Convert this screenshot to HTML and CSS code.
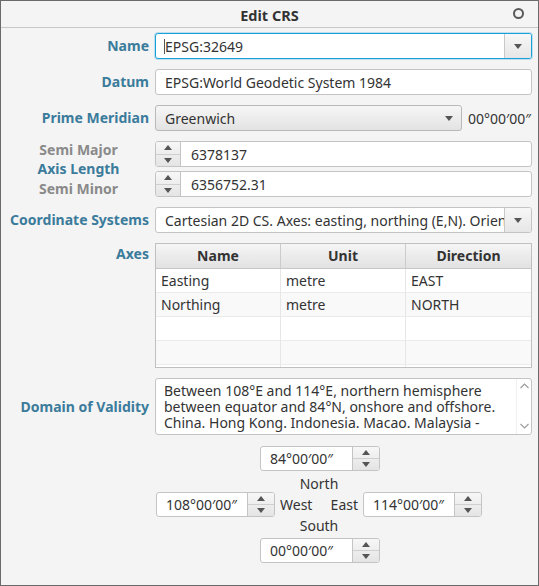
FILE: index.html
```
<!DOCTYPE html>
<html>
<head>
<meta charset="utf-8">
<link rel="stylesheet" href="styles.css">
</head>
<body>
<div class="window">
  <div class="titlebar">
    <span></span>
    <span class="title">Edit CRS</span>
    <span class="ring"></span>
  </div>
  <div class="form">
    <div class="lbl">Name</div>
    <div class="combo editable focused">
      <div class="ctext"><span class="caret"></span>EPSG:32649</div>
      <div class="cbtn"><span class="tri-down"></span></div>
    </div>

    <div class="lbl">Datum</div>
    <div class="field">EPSG:World Geodetic System 1984</div>

    <div class="lbl">Prime Meridian</div>
    <div class="prime-row">
      <div class="combo plain">
        <div class="ctext">Greenwich</div>
        <div class="cbtn plain-btn"><span class="tri-down"></span></div>
      </div>
      <span class="pm-value">00°00′00″</span>
    </div>

    <div class="semi-labels">
      <div class="lbl gray">Semi Major</div>
      <div class="lbl">Axis Length</div>
      <div class="lbl gray">Semi Minor</div>
    </div>
    <div class="semi-spins">
      <div class="lspin">
        <div class="sbtns"><div class="sb"><span class="tri-up"></span></div><div class="sb"><span class="tri-down"></span></div></div>
        <div class="stext">6378137</div>
      </div>
      <div class="lspin">
        <div class="sbtns"><div class="sb"><span class="tri-up"></span></div><div class="sb"><span class="tri-down"></span></div></div>
        <div class="stext">6356752.31</div>
      </div>
    </div>

    <div class="lbl">Coordinate Systems</div>
    <div class="combo editable">
      <div class="ctext clip">Cartesian 2D CS. Axes: easting, northing (E,N). Orientations: east, north. UoM: m.</div>
      <div class="cbtn"><span class="tri-down"></span></div>
    </div>

    <div class="lbl top">Axes</div>
    <div class="table">
      <div class="th">Name</div><div class="th">Unit</div><div class="th last">Direction</div>
      <div class="td">Easting</div><div class="td">metre</div><div class="td last">EAST</div>
      <div class="td odd">Northing</div><div class="td odd">metre</div><div class="td odd last">NORTH</div>
      <div class="td"></div><div class="td"></div><div class="td last"></div>
      <div class="td odd"></div><div class="td odd"></div><div class="td odd last"></div>
      <div class="td"></div><div class="td"></div><div class="td last"></div>
    </div>

    <div class="lbl">Domain of Validity</div>
    <div class="textarea">
      <div class="ta-text">Between 108°E and 114°E, northern hemisphere<br>between equator and 84°N, onshore and offshore.<br>China. Hong Kong. Indonesia. Macao. Malaysia -</div>
      <div class="ta-scroll">
        <svg width="9" height="6" viewBox="0 0 9 6"><path d="M0.5 5 L4.5 1 L8.5 5" fill="none" stroke="#9a9a9a" stroke-width="1.1"/></svg>
        <svg width="9" height="6" viewBox="0 0 9 6"><path d="M0.5 1 L4.5 5 L8.5 1" fill="none" stroke="#9a9a9a" stroke-width="1.1"/></svg>
      </div>
    </div>

    <div></div>
    <div class="compass">
      <div class="rspin center">
        <div class="stext">84°00′00″</div>
        <div class="sbtns right"><div class="sb"><span class="tri-up"></span></div><div class="sb"><span class="tri-down"></span></div></div>
      </div>
      <div class="clabel north">North</div>
      <div class="rspin">
        <div class="stext">108°00′00″</div>
        <div class="sbtns right"><div class="sb"><span class="tri-up"></span></div><div class="sb"><span class="tri-down"></span></div></div>
      </div>
      <div class="we"><span>West</span><span>East</span></div>
      <div class="rspin">
        <div class="stext">114°00′00″</div>
        <div class="sbtns right"><div class="sb"><span class="tri-up"></span></div><div class="sb"><span class="tri-down"></span></div></div>
      </div>
      <div class="clabel south">South</div>
      <div class="rspin center">
        <div class="stext">00°00′00″</div>
        <div class="sbtns right"><div class="sb"><span class="tri-up"></span></div><div class="sb"><span class="tri-down"></span></div></div>
      </div>
    </div>
  </div>
</div>
</body>
</html>
```
FILE: styles.css
```
* { box-sizing: border-box; }
html, body { margin: 0; padding: 0; }
body {
  font-family: "Noto Sans", "Open Sans", sans-serif;
  font-size: 14px;
  color: #333;
  background: #f4f4f4;
}
.window {
  width: 539px;
  height: 586px;
  border: 1px solid #6a6a6a;
  background: #f4f4f4;
  display: flex;
  flex-direction: column;
  overflow: hidden;
}
.titlebar {
  height: 27px;
  flex: none;
  border-bottom: 1px solid #c8c8c8;
  display: grid;
  grid-template-columns: 1fr auto 1fr;
  align-items: center;
}
.title {
  font-weight: bold;
  font-size: 14.5px;
  color: #333;
  padding-top: 1px;
}
.ring {
  justify-self: end;
  margin-right: 14px;
  margin-top: -1px;
  width: 11px;
  height: 11px;
  border: 2px solid #5a5a5a;
  border-radius: 50%;
}
.form {
  display: grid;
  grid-template-columns: 141px 1fr;
  column-gap: 6px;
  row-gap: 10px;
  padding: 5px 6px 0 7px;
}
.lbl {
  font-weight: bold;
  color: #3b7b9b;
  text-align: right;
  align-self: center;
  white-space: nowrap;
  line-height: 18px;
}
.lbl.gray { color: #8a8a8a; }
.lbl.top { align-self: start; margin-top: 2px; }

.field {
  height: 26px;
  background: #fff;
  border: 1px solid #c4c4c4;
  border-radius: 3px;
  padding: 0 9px;
  display: flex;
  align-items: center;
  white-space: nowrap;
}
.combo {
  display: flex;
  height: 26px;
  border: 1px solid #c4c4c4;
  border-radius: 3px;
  background: #fff;
  overflow: hidden;
}
.combo.focused {
  border-color: #1aa0d8;
  box-shadow: 0 0 0 1px rgba(26, 160, 216, 0.25);
}
.ctext {
  flex: 1;
  min-width: 0;
  padding: 0 9px;
  display: flex;
  align-items: center;
  white-space: nowrap;
  overflow: hidden;
}
.ctext.clip { padding-right: 4px; }
.caret {
  width: 1px;
  height: 15px;
  background: #555;
  margin-left: -1px;
}
.cbtn {
  width: 27px;
  flex: none;
  border-left: 1px solid #c8c8c8;
  background: linear-gradient(#f7f7f7, #e6e6e6);
  display: flex;
  align-items: center;
  justify-content: center;
}
.combo.plain {
  width: 307px;
  background: linear-gradient(#f6f6f6, #e3e3e3);
  border-color: #b9b9b9;
}
.cbtn.plain-btn {
  border-left: none;
  background: transparent;
  width: 24px;
}
.prime-row {
  display: flex;
  align-items: center;
  gap: 6px;
}
.pm-value { white-space: nowrap; }

.tri-down {
  width: 0;
  height: 0;
  border-left: 4px solid transparent;
  border-right: 4px solid transparent;
  border-top: 5px solid #555;
}
.tri-up {
  width: 0;
  height: 0;
  border-left: 4px solid transparent;
  border-right: 4px solid transparent;
  border-bottom: 5px solid #555;
}

.semi-labels {
  display: flex;
  flex-direction: column;
  justify-content: center;
  align-items: flex-end;
  height: 56px;
}
.semi-labels .lbl { line-height: 19.5px; }
.semi-spins {
  display: flex;
  flex-direction: column;
  gap: 4px;
}
.lspin, .rspin {
  display: flex;
  height: 26px;
  border: 1px solid #c4c4c4;
  border-radius: 3px;
  overflow: hidden;
  background: #fff;
}
.sbtns {
  width: 25px;
  flex: none;
  display: flex;
  flex-direction: column;
  border-right: 1px solid #c4c4c4;
  background: linear-gradient(#f7f7f7, #e4e4e4);
}
.sbtns.right {
  width: 27px;
  border-right: none;
  border-left: 1px solid #c4c4c4;
}
.sb {
  flex: 1;
  display: flex;
  align-items: center;
  justify-content: center;
}
.sb + .sb { border-top: 1px solid #cfcfcf; }
.stext {
  flex: 1;
  min-width: 0;
  display: flex;
  align-items: center;
  padding-left: 10px;
  white-space: nowrap;
}

.table {
  height: 125px;
  border: 1px solid #c0c0c0;
  background: #fff;
  overflow: hidden;
  display: grid;
  grid-template-columns: 125px 125px 1fr;
  grid-template-rows: 25px;
  grid-auto-rows: 24px;
}
.th {
  font-weight: bold;
  text-align: center;
  line-height: 24px;
  background: linear-gradient(#f5f5f5, #e2e2e2);
  border-right: 1px solid #cbcbcb;
  border-bottom: 1px solid #c6c6c6;
}
.th.last { border-right: none; }
.td {
  padding-left: 5px;
  line-height: 23px;
  border-right: 1px solid #e6e6e6;
  border-bottom: 1px solid #ebebeb;
  background: #fff;
}
.td.odd { background: #f9f9f9; }
.td.last { border-right: none; }

.textarea {
  height: 57px;
  background: #fff;
  border: 1px solid #c4c4c4;
  border-radius: 3px;
  display: flex;
  overflow: hidden;
}
.ta-text {
  flex: 1;
  padding: 4px 8px;
  line-height: 16px;
  white-space: nowrap;
  overflow: hidden;
}
.ta-scroll {
  width: 15px;
  flex: none;
  display: flex;
  flex-direction: column;
  justify-content: space-between;
  align-items: center;
  padding: 4px 0 5px;
  border-left: 1px solid #f0f0f0;
}

.compass {
  display: grid;
  grid-template-columns: 119px 88px 119px;
  margin-left: 1px;
  margin-top: 1px;
}
.compass .rspin { height: 25px; }
.compass .stext { padding-left: 9px; }
.rspin.center {
  grid-column: 1 / 4;
  justify-self: center;
  width: 120px;
  margin-left: 2px;
}
.clabel {
  grid-column: 1 / 4;
  text-align: center;
  line-height: 16px;
}
.clabel.north { padding-top: 5px; }
.clabel.south { padding-top: 1px; padding-bottom: 4px; }
.we {
  display: flex;
  justify-content: space-between;
  align-items: center;
  padding: 0 5px;
}
```
